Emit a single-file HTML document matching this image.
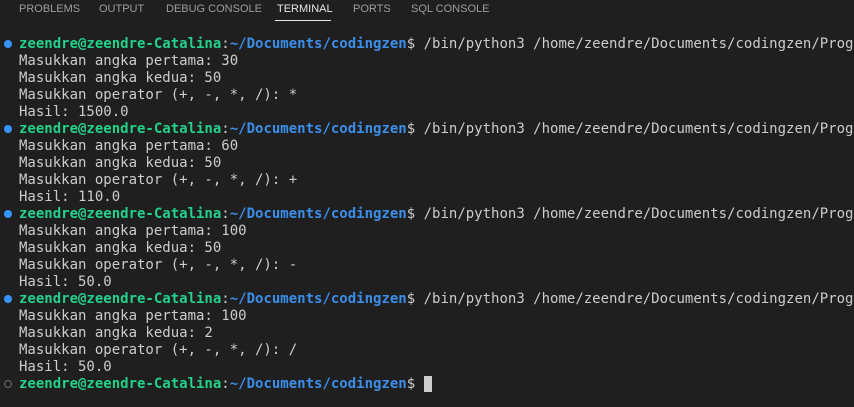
<!DOCTYPE html>
<html><head><style>
body{margin:0;width:854px;height:407px;background:#1f1f1f;overflow:hidden;position:relative;font-family:"DejaVu Sans Mono","Liberation Mono",monospace}
.tab{position:absolute;top:3px;font:11px "Liberation Sans",sans-serif;color:#9d9d9d;letter-spacing:0}
.term{position:absolute;left:19px;top:36px;font-size:14px;line-height:17px;color:#cccccc;white-space:pre}
.g{color:#23d18b;font-weight:bold}.b{color:#3b8eea;font-weight:bold}
.dot{position:absolute;left:4px;width:8px;height:8px;border-radius:50%}
</style></head><body>
<div class="tab" style="left:19px">PROBLEMS</div>
<div class="tab" style="left:99px">OUTPUT</div>
<div class="tab" style="left:166px">DEBUG CONSOLE</div>
<div class="tab" style="left:277px;color:#e7e7e7">TERMINAL</div>
<div style="position:absolute;left:275px;top:20px;width:56px;height:1px;background:#e7e7e7"></div>
<div class="tab" style="left:353px">PORTS</div>
<div class="tab" style="left:411px">SQL CONSOLE</div>
<div class="dot" style="top:40px;background:#3794ff"></div>
<div class="dot" style="top:125px;background:#3794ff"></div>
<div class="dot" style="top:210px;background:#3794ff"></div>
<div class="dot" style="top:295px;background:#3794ff"></div>
<div class="dot" style="top:380px;border:1px solid #6e6e6e;width:6px;height:6px"></div>
<div class="term"><span class="g">zeendre@zeendre-Catalina</span>:<span class="b">~/Documents/codingzen</span>$ /bin/python3 /home/zeendre/Documents/codingzen/Prog
Masukkan angka pertama: 30
Masukkan angka kedua: 50
Masukkan operator (+, -, *, /): *
Hasil: 1500.0
<span class="g">zeendre@zeendre-Catalina</span>:<span class="b">~/Documents/codingzen</span>$ /bin/python3 /home/zeendre/Documents/codingzen/Prog
Masukkan angka pertama: 60
Masukkan angka kedua: 50
Masukkan operator (+, -, *, /): +
Hasil: 110.0
<span class="g">zeendre@zeendre-Catalina</span>:<span class="b">~/Documents/codingzen</span>$ /bin/python3 /home/zeendre/Documents/codingzen/Prog
Masukkan angka pertama: 100
Masukkan angka kedua: 50
Masukkan operator (+, -, *, /): -
Hasil: 50.0
<span class="g">zeendre@zeendre-Catalina</span>:<span class="b">~/Documents/codingzen</span>$ /bin/python3 /home/zeendre/Documents/codingzen/Prog
Masukkan angka pertama: 100
Masukkan angka kedua: 2
Masukkan operator (+, -, *, /): /
Hasil: 50.0
<span class="g">zeendre@zeendre-Catalina</span>:<span class="b">~/Documents/codingzen</span>$ <span style="background:#cccccc"> </span></div>
</body></html>
